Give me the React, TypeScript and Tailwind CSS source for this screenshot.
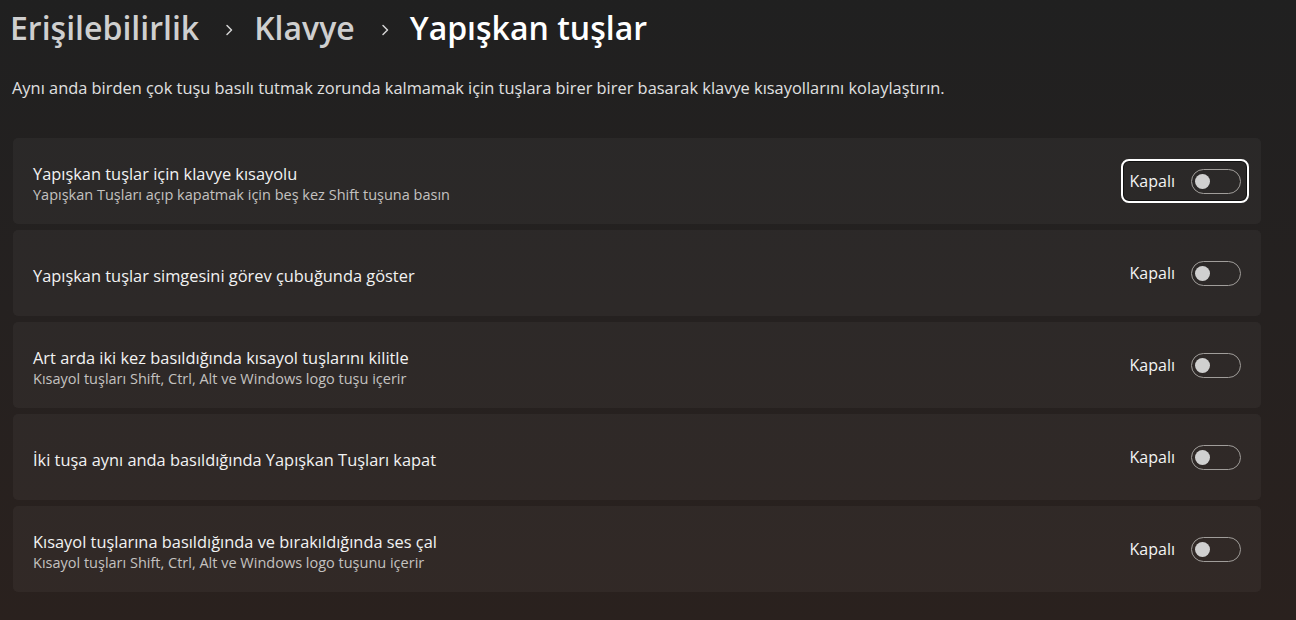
import React from "react"

type Row = {
	title: string
	subtitle?: string
	focused?: boolean
}

const rows: Row[] = [
	{
		title: "Yapışkan tuşlar için klavye kısayolu",
		subtitle: "Yapışkan Tuşları açıp kapatmak için beş kez Shift tuşuna basın",
		focused: true,
	},
	{ title: "Yapışkan tuşlar simgesini görev çubuğunda göster" },
	{
		title: "Art arda iki kez basıldığında kısayol tuşlarını kilitle",
		subtitle: "Kısayol tuşları Shift, Ctrl, Alt ve Windows logo tuşu içerir",
	},
	{ title: "İki tuşa aynı anda basıldığında Yapışkan Tuşları kapat" },
	{
		title: "Kısayol tuşlarına basıldığında ve bırakıldığında ses çal",
		subtitle: "Kısayol tuşları Shift, Ctrl, Alt ve Windows logo tuşunu içerir",
	},
]

function Chevron() {
	return (
		<svg width="10" height="14" viewBox="0 0 10 14" className="ml-[25px] mr-[20px] mt-[4px] text-[#d4d4d4]">
			<path d="M3 2.5 L7.5 7 L3 11.5" fill="none" stroke="currentColor" strokeWidth="1.5" strokeLinecap="round" strokeLinejoin="round" />
		</svg>
	)
}

function Toggle({ focused }: { focused?: boolean }) {
	return (
		<div
			className={
				focused
					? "flex h-[44px] items-center gap-[16px] rounded-[8px] border-2 border-white pl-[7px] pr-[6px] shadow-[inset_0_0_0_1px_#111]"
					: "flex h-[44px] items-center gap-[16px] rounded-[8px] border-2 border-transparent pl-[7px] pr-[6px]"
			}
		>
			<span className="text-[16px] text-[#f3f3f3]">Kapalı</span>
			<div className="flex h-[25px] w-[50px] items-center rounded-full border border-[#a09d9a] pl-[3px]">
				<div className="h-[15px] w-[15px] rounded-full bg-[#d0d0d0]" />
			</div>
		</div>
	)
}

function SettingCard({ row }: { row: Row }) {
	return (
		<div className="flex h-[86px] items-center justify-between rounded-[5px] bg-white/[0.04] pl-[20px] pr-[12px]">
			<div className="flex flex-col pt-[5px]">
				<span className="text-[16.4px] leading-[22px] text-[#f2f2f2]">{row.title}</span>
				{row.subtitle && (
					<span className="text-[14.5px] leading-[20px] text-[#c4c2c0]">{row.subtitle}</span>
				)}
			</div>
			<Toggle focused={row.focused} />
		</div>
	)
}

export default function App() {
	return (
		<div
			className="h-[620px] w-[1296px] overflow-hidden bg-linear-to-b from-[#202020] via-[#252120] to-[#2a211e]"
			style={{ fontFamily: '"Open Sans", "Noto Sans", sans-serif' }}
		>
			<div className="flex items-center pl-[10px] pt-[6px] text-[32px] font-semibold leading-[44px]">
				<span className="text-[#cfcfcf]">Erişilebilirlik</span>
				<Chevron />
				<span className="text-[#cfcfcf]">Klavye</span>
				<Chevron />
				<span className="text-white">Yapışkan tuşlar</span>
			</div>
			<p className="mt-[27px] pl-[12px] text-[16.4px] leading-[22px] text-[#e0e0e0]">
				Aynı anda birden çok tuşu basılı tutmak zorunda kalmamak için tuşlara birer birer basarak klavye kısayollarını kolaylaştırın.
			</p>
			<div className="ml-[13px] mr-[35px] mt-[39px] flex flex-col gap-[6px]">
				{rows.map((r) => (
					<SettingCard key={r.title} row={r} />
				))}
			</div>
		</div>
	)
}
